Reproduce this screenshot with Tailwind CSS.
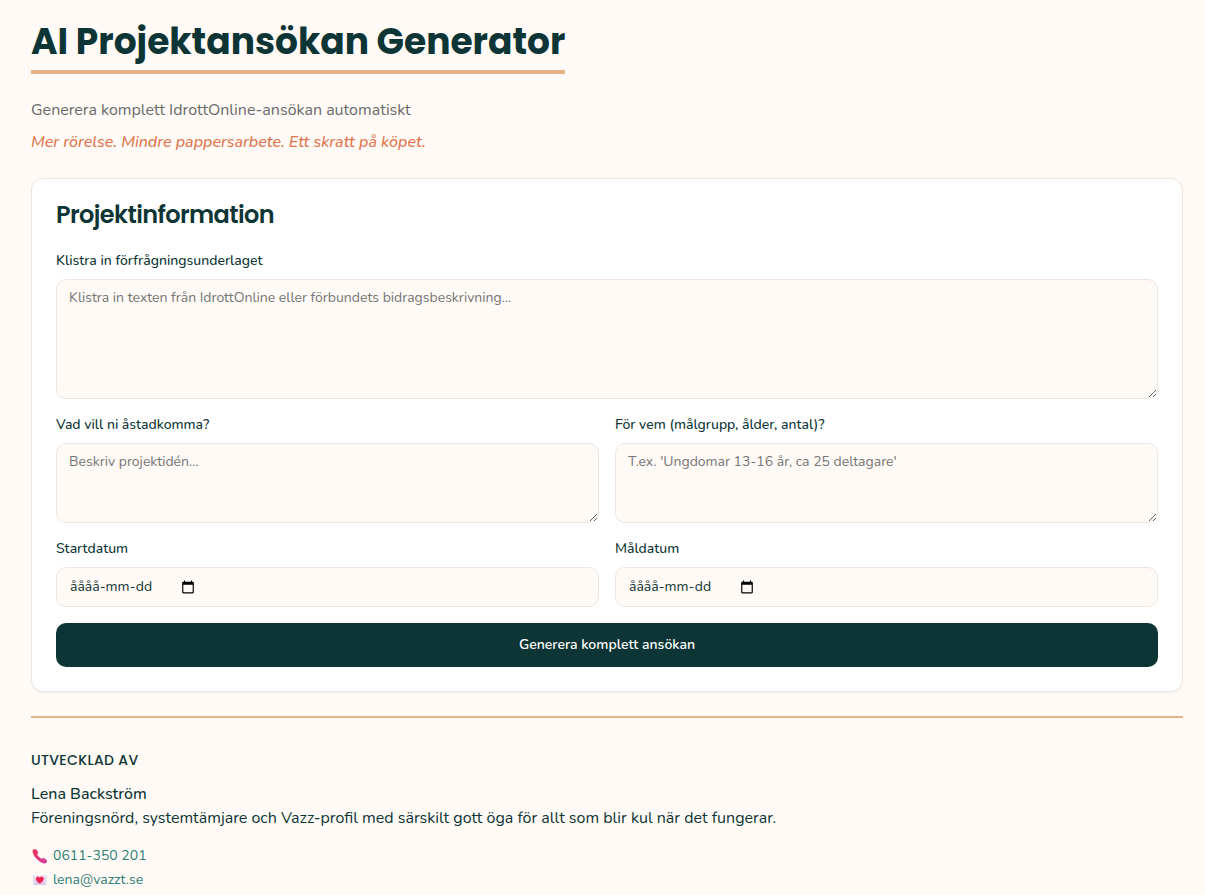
<!DOCTYPE html>
<html lang="sv">
<head>
<meta charset="utf-8">
<meta name="viewport" content="width=device-width, initial-scale=1">
<title>AI Projektansökan Generator</title>
<script src="https://cdn.jsdelivr.net/npm/@tailwindcss/browser@4"></script>
</head>
<body class="bg-[#fffaf5] text-[#0d3535] font-['Nunito','Noto_Sans',sans-serif] text-base leading-6">
<div class="pl-[31px] pr-[22px] pt-[19px]">
  <header class="flex flex-col items-start">
    <h1 class="font-['Poppins','Inter',sans-serif] text-[36px] leading-[45px] font-bold pb-[6px] border-b-4 border-[#e8b287]">AI Projektansökan Generator</h1>
    <p class="mt-6 text-[#6b6b6b]">Generera komplett IdrottOnline-ansökan automatiskt</p>
    <p class="mt-2 italic font-medium text-[#e07650]">Mer rörelse. Mindre pappersarbete. Ett skratt på köpet.</p>
  </header>

  <main class="mt-6">
    <form class="bg-white border border-[#f0e6df] rounded-xl p-6 shadow-[0_1px_2px_rgb(0_0_0/0.05)]">
      <h2 class="font-['Poppins','Inter',sans-serif] text-[24px] leading-6 font-semibold tracking-tight">Projektinformation</h2>
      <div class="mt-6 flex flex-col gap-2">
        <label for="brief" class="text-[14px] leading-5 font-medium">Klistra in förfrågningsunderlaget</label>
        <textarea id="brief" class="h-[120px] w-full rounded-[10px] border border-[#f0e6df] bg-[#fffaf5] px-3 py-2 text-[14px] leading-5 placeholder:text-[#757575]" placeholder="Klistra in texten från IdrottOnline eller förbundets bidragsbeskrivning..."></textarea>
      </div>
      <div class="mt-4 grid grid-cols-2 gap-4">
        <div class="flex flex-col gap-2">
          <label for="goal" class="text-[14px] leading-5 font-medium">Vad vill ni åstadkomma?</label>
          <textarea id="goal" class="h-20 w-full rounded-[10px] border border-[#f0e6df] bg-[#fffaf5] px-3 py-2 text-[14px] leading-5 placeholder:text-[#757575]" placeholder="Beskriv projektidén..."></textarea>
        </div>
        <div class="flex flex-col gap-2">
          <label for="audience" class="text-[14px] leading-5 font-medium">För vem (målgrupp, ålder, antal)?</label>
          <textarea id="audience" class="h-20 w-full rounded-[10px] border border-[#f0e6df] bg-[#fffaf5] px-3 py-2 text-[14px] leading-5 placeholder:text-[#757575]" placeholder="T.ex. 'Ungdomar 13-16 år, ca 25 deltagare'"></textarea>
        </div>
        <div class="flex flex-col gap-2">
          <label for="start" class="text-[14px] leading-5 font-medium">Startdatum</label>
          <div class="flex h-10 items-center rounded-[10px] border border-[#f0e6df] bg-[#fffaf5] px-3">
            <input id="start" type="text" placeholder="åååå-mm-dd" class="w-[111px] bg-transparent pl-px text-[14px] leading-5 outline-none placeholder:text-[#0d3535]">
            <button type="button" aria-label="Välj startdatum" class="flex size-4 items-center justify-center text-black">
              <svg class="size-[14px]" viewBox="0 0 24 24" fill="currentColor"><path d="M20 3h-1V1h-2v2H7V1H5v2H4c-1.100 0-2 .9-2 2v16c0 1.100.9 2 2 2h16c1.100 0 2-.9 2-2V5c0-1.100-.9-2-2-2zm0 18H4V8h16v13z"/></svg>
            </button>
          </div>
        </div>
        <div class="flex flex-col gap-2">
          <label for="end" class="text-[14px] leading-5 font-medium">Måldatum</label>
          <div class="flex h-10 items-center rounded-[10px] border border-[#f0e6df] bg-[#fffaf5] px-3">
            <input id="end" type="text" placeholder="åååå-mm-dd" class="w-[111px] bg-transparent pl-px text-[14px] leading-5 outline-none placeholder:text-[#0d3535]">
            <button type="button" aria-label="Välj måldatum" class="flex size-4 items-center justify-center text-black">
              <svg class="size-[14px]" viewBox="0 0 24 24" fill="currentColor"><path d="M20 3h-1V1h-2v2H7V1H5v2H4c-1.100 0-2 .9-2 2v16c0 1.100.9 2 2 2h16c1.100 0 2-.9 2-2V5c0-1.100-.9-2-2-2zm0 18H4V8h16v13z"/></svg>
            </button>
          </div>
        </div>
      </div>
      <button type="submit" class="mt-4 h-11 w-full rounded-[10px] bg-[#0d3535] text-[14px] leading-5 font-semibold text-white">Generera komplett ansökan</button>
    </form>
  </main>

  <footer class="mt-6 border-t-2 border-[#e8b287] pt-8">
    <h3 class="font-['Poppins','Inter',sans-serif] text-[14px] leading-5 font-medium uppercase tracking-wide">Utvecklad av</h3>
    <p class="mt-3 font-medium">Lena Backström</p>
    <p>Föreningsnörd, systemtämjare och Vazz-profil med särskilt gott öga för allt som blir kul när det fungerar.</p>
    <ul class="mt-[14px] text-[14px] text-[#2f7f76]">
      <li><a href="tel:0611350201" class="flex items-center gap-[6px]">
        <svg class="ml-px size-[15px]" viewBox="0 0 16 16" aria-hidden="true"><defs><linearGradient id="handset" x1="0" y1="0" x2="1" y2="1"><stop offset="0" stop-color="#f02f55"/><stop offset="1" stop-color="#cf3fa0"/></linearGradient></defs><path fill="url(#handset)" stroke="url(#handset)" stroke-width=".6" d="M1.500.9C2.500-.2 4-.1 4.800 1.100L6.100 3.200c.6 1-.1 1.700-.8 2.500.8 2 2.700 4 4.900 5 .9-.9 1.700-1.200 2.600-.6l2.400 1.500c1.200.8 1.200 2 .2 2.800-1.400 1.200-3.700.9-6.400-.8C5.500 11.500 2.700 8.300 1.400 4.800.8 3.100.7 1.700 1.500.9z"/></svg>
        <span>0611-350 201</span></a></li>
      <li><a href="mailto:lena@vazzt.se" class="flex items-center gap-[6px]">
        <svg class="ml-px size-[15px]" viewBox="0 0 16 16" aria-hidden="true"><path fill="#e5d8ee" d="M1 2.300h14.500v10.500H1z"/><path fill="#d8c9e6" d="M1 12.800 6 7.500h4l5.500 5.300z"/><path fill="#f2eaf7" d="M1 2.300h14.500L8.300 8.800z"/><path fill="#f52455" d="M8.300 11.500C5.500 9.700 4.100 8 4.100 6.100c0-2.500 3-3.300 4.200-1.200 1.200-2.100 4.200-1.300 4.200 1.200 0 1.900-1.400 3.600-4.200 5.400z"/></svg>
        <span>lena@vazzt.se</span></a></li>
    </ul>
  </footer>
</div>
</body>
</html>
